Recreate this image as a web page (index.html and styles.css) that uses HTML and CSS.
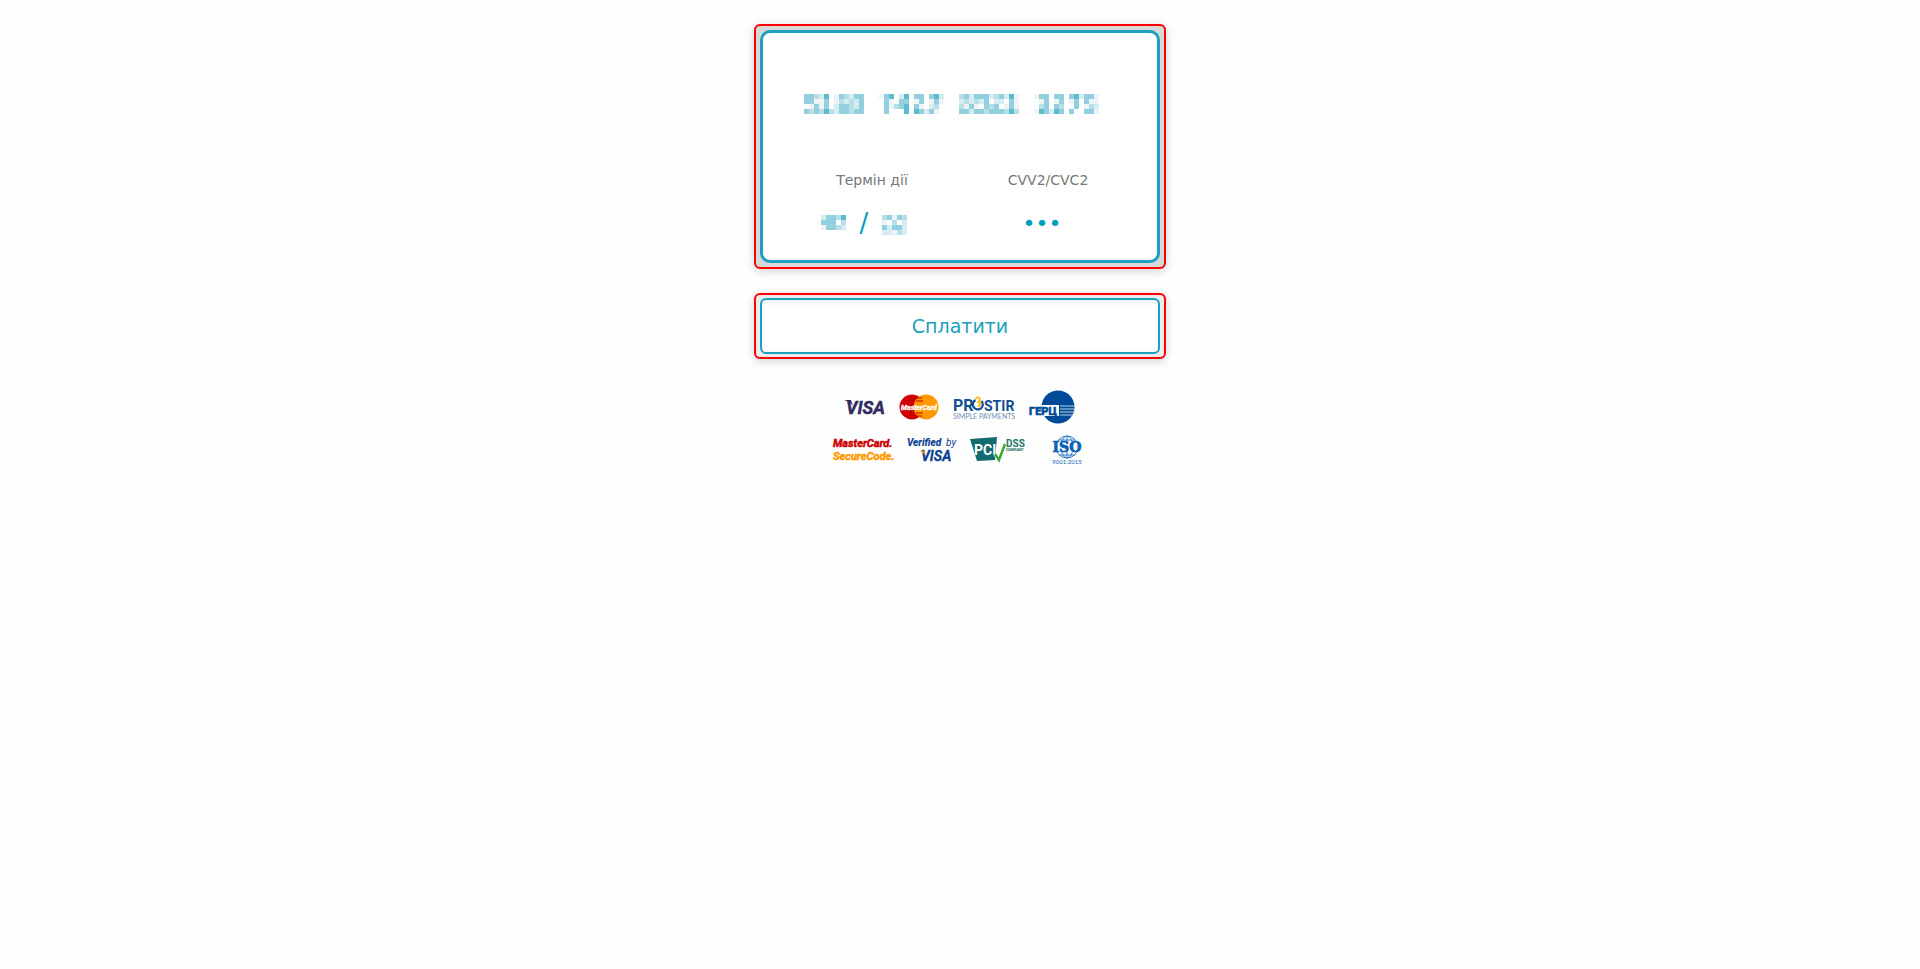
FILE: index.html
```
<!DOCTYPE html>
<html lang="uk">
<head>
  <meta charset="UTF-8" />
  <meta name="viewport" content="width=device-width, initial-scale=1" />
  <title>Оплата</title>
  <link rel="stylesheet" href="styles.css">
</head>
<body>
  <form class="payment">
    <div class="frame frame-card">
      <div class="card">
        <div class="field number-field">
          <input type="text" id="card_number" aria-label="Номер картки" readonly />
          <svg class="mosaic" id="mosaic-number" width="295" height="20" viewBox="0 0 59 4"></svg>
        </div>
        <div class="columns">
          <div class="column">
            <label for="exp_month">Термін дії</label>
            <div class="expiry">
              <div class="field short-field">
                <input type="text" id="exp_month" readonly />
                <svg class="mosaic" id="mosaic-month" width="25" height="15" viewBox="0 0 5 3"></svg>
              </div>
              <span class="slash">/</span>
              <div class="field short-field">
                <input type="text" id="exp_year" aria-label="Рік" readonly />
                <svg class="mosaic" id="mosaic-year" width="25" height="20" viewBox="0 0 5 4"></svg>
              </div>
            </div>
          </div>
          <div class="column">
            <label for="cvv">CVV2/CVC2</label>
            <div class="cvv-field">
              <input type="text" id="cvv" value="•••" maxlength="3" />
            </div>
          </div>
        </div>
      </div>
    </div>

    <div class="frame frame-button">
      <button type="button" class="pay-btn">Сплатити</button>
    </div>

    <div class="logos">
      <div class="logo-row">
        <svg width="40" height="34" viewBox="0 0 40 34">
          <text x="1" y="24" class="logo-text italic" font-size="18" fill="#2f2a60" stroke="#2f2a60" stroke-width="0.400">VISA</text>
          <path d="M-1 10h7l2 6C6 13 3 11-1 10z" fill="#2f2a60" />
        </svg>
        <svg width="40" height="34" viewBox="0 0 40 34">
          <circle cx="13" cy="17" r="12.5" fill="#c00" />
          <circle cx="27" cy="17" r="12.5" fill="#f90" />
          <path d="M18 8h5M17 11h7M17 23h7M18 26h5" stroke="#c00" stroke-width="1.2" />
          <text x="20" y="20" class="logo-text italic" font-size="7" text-anchor="middle" fill="#fff" stroke="#fff" stroke-width="0.300">MasterCard</text>
        </svg>
        <svg width="62" height="34" viewBox="0 0 62 34">
          <text x="0" y="21" class="logo-text" font-size="16" fill="#114f8f">PR</text>
          <path d="M22.500 10a5 5 0 1 0 6 1" fill="none" stroke="#114f8f" stroke-width="2.200" />
          <path d="M22.500 9c3-4 6 0 3 3 3 0 2 4-1 4" fill="none" stroke="#fdb913" stroke-width="1.800" />
          <text x="31" y="21" class="logo-text" font-size="14" fill="#114f8f">STIR</text>
          <text x="0" y="29" class="logo-small" font-size="7" fill="#6f93b8">SIMPLE PAYMENTS</text>
        </svg>
        <svg width="46" height="34" viewBox="0 0 46 34">
          <circle cx="29" cy="17" r="16.500" fill="#004a98" />
          <path d="M0 15h30v11H0z" fill="#fff" />
          <path d="M31 16h15M31 19h15M31 22h15M31 25h14" stroke="#bcd0e6" stroke-width="1.200" />
          <text x="0" y="25" class="logo-text" font-size="11" fill="#004a98" stroke="#004a98" stroke-width="0.700">ГЕРЦ</text>
        </svg>
      </div>
      <div class="logo-row second">
        <svg width="63" height="30" viewBox="0 0 63 30">
          <text x="0" y="12" class="logo-text italic" font-size="11" fill="#c00" stroke="#c00" stroke-width="0.500">MasterCard.</text>
          <text x="0" y="25" class="logo-text italic" font-size="11" fill="#f90" stroke="#f90" stroke-width="0.500">SecureCode.</text>
        </svg>
        <svg width="52" height="30" viewBox="0 0 52 30">
          <text x="0" y="11" class="logo-text italic" font-size="10" fill="#0b3f93" stroke="#0b3f93" stroke-width="0.200">Verified</text>
          <text x="39" y="11" class="logo-by" font-size="10" fill="#0b3f93">by</text>
          <text x="14" y="26" class="logo-text italic" font-size="14" fill="#0b3f93" stroke="#0b3f93" stroke-width="0.300">VISA</text>
          <path d="M12 16h5l2 5c-2-3-4-4-7-5z" fill="#f90" />
        </svg>
        <svg width="56" height="30" viewBox="0 0 56 30">
          <path d="M0 4l27-2-2 23-18 1z" fill="#126b6f" />
          <text x="4" y="20" class="logo-text" font-size="14" fill="#fff">PCI</text>
          <path d="M25 19l4 6 6-15" fill="none" stroke="#fff" stroke-width="3.500" />
          <path d="M25 19l4 6 6-16" fill="none" stroke="#3aa935" stroke-width="2.500" />
          <text x="36" y="12" class="logo-text" font-size="10" fill="#277768">DSS</text>
          <text x="36" y="16" class="logo-small" font-size="3" fill="#277768" stroke="#277768" stroke-width="0.200">COMPLIANT</text>
        </svg>
        <svg width="51" height="30" viewBox="0 0 51 30">
          <g fill="none" stroke="#2f7bc4" stroke-width="1">
            <circle cx="30" cy="12" r="11" />
            <ellipse cx="30" cy="12" rx="6" ry="11" />
            <path d="M30 1v22M22 5h16M22 20h16" />
          </g>
          <path d="M14 7h32v10H14z" fill="#fff" />
          <text x="30" y="17" class="logo-iso" font-size="14" text-anchor="middle" fill="#0a62b4" stroke="#0a62b4" stroke-width="0.700">ISO</text>
          <text x="30" y="29" class="logo-small" font-size="6" text-anchor="middle" fill="#0a62b4">9001:2015</text>
        </svg>
      </div>
    </div>
  </form>

  <script>
    // a - darkest shade, e - lightest, dot - empty cell
    const shades = { a: "#5cbbcf", b: "#92d0df", c: "#b8dfe7", d: "#d3edf1", e: "#eef4f5" };

    const drawMosaic = (id, rows) => {
      const svg = document.getElementById(id);
      rows.forEach((row, y) => {
        [...row].forEach((cell, x) => {
          if (!shades[cell]) return;
          const rect = document.createElementNS("http://www.w3.org/2000/svg", "rect");
          rect.setAttribute("x", x);
          rect.setAttribute("y", y);
          rect.setAttribute("width", 1);
          rect.setAttribute("height", 1);
          rect.setAttribute("fill", shades[cell]);
          svg.appendChild(rect);
        });
      });
    };

    drawMosaic("mosaic-number", [
      "bbcda.ebcdbb...eba.da.bb.bad...cbdbbbdcbdae...ebb.bb.badbbe",
      "bbeeb.ecdcdb....be.bb.eb.ebe...dcdcdb.dd.be....eb.eb.eb.bee",
      ".ebeb.dbbcdb....becba.be.dc....cebe.bcb.ebe....cb.bc..b.ecd",
      "bcbcacdbbcbb....b...a.abdbe....bbdbbcbbbcac...eabdab.b..bbe"
    ]);
    drawMosaic("mosaic-month", [
      "dbbca",
      "bbb.c",
      "ebbcd"
    ]);
    drawMosaic("mosaic-year", [
      "cbebc",
      "e.c.d",
      "bdbbd",
      "ddecd"
    ]);
  </script>
</body>
</html>
```
FILE: styles.css
```
body {
  margin: 0;
  padding: 24px 16px;
  background: #fefefe;
  font-family: "DejaVu Sans", Verdana, sans-serif;
}
.payment {
  max-width: 412px;
  margin: 0 auto;
}
.frame {
  border: 2px solid #ff0000;
  border-radius: 6px;
  box-shadow: 0 2px 10px rgba(0, 0, 0, 0.18);
}
.frame-card {
  padding: 4px;
  margin-bottom: 24px;
  background: #d8d8d8;
}
.frame-button {
  padding: 3px 4px;
  margin-bottom: 31px;
  background: #ececec;
}
.card {
  box-sizing: border-box;
  padding: 51px 21px 17px;
  border: 3px solid #1ba0bd;
  border-radius: 10px;
  background: #fff;
}
input {
  box-sizing: border-box;
  width: 100%;
  height: 40px;
  padding: 0;
  border: none;
  outline: none;
  background: transparent;
  color: #009dbf;
  font-family: inherit;
  font-size: 22px;
  text-align: center;
}
.field {
  position: relative;
}
.number-field {
  margin-bottom: 46px;
}
.mosaic {
  position: absolute;
  top: 12px;
  left: 0;
  pointer-events: none;
}
.number-field .mosaic {
  top: 10px;
  left: 20px;
}
.columns {
  display: grid;
  grid-template-columns: 1fr 1fr;
}
label {
  display: block;
  margin-bottom: 13px;
  color: #777;
  font-size: 14px;
  line-height: 20px;
  text-align: center;
}
.expiry {
  display: flex;
  justify-content: center;
  align-items: center;
  gap: 13px;
  margin-right: 16px;
}
.short-field {
  width: 25px;
}
.slash {
  width: 10px;
  color: #009dbf;
  font-size: 26px;
  line-height: 40px;
  text-align: center;
}
.cvv-field {
  margin-right: 12px;
}
.pay-btn {
  display: block;
  width: 100%;
  height: 56px;
  padding: 0;
  border: 2px solid #1ba0bd;
  border-radius: 6px;
  background: #fff;
  box-shadow: inset 0 2px 6px rgba(0, 0, 0, 0.06);
  color: #1ba0bd;
  font-family: inherit;
  font-size: 19px;
  cursor: pointer;
}
.logo-row {
  display: flex;
  justify-content: center;
  gap: 14px;
}
.logo-row svg {
  overflow: visible;
}
.logo-row.second {
  gap: 11px;
  margin-top: 11px;
}
.logo-text {
  font-family: Roboto, sans-serif;
  font-weight: bold;
}
.italic {
  font-style: italic;
}
.logo-by {
  font-family: Roboto, sans-serif;
  font-style: italic;
}
.logo-small {
  font-family: Lato, sans-serif;
}
.logo-iso {
  font-family: "DejaVu Serif", serif;
  font-weight: bold;
}
```
